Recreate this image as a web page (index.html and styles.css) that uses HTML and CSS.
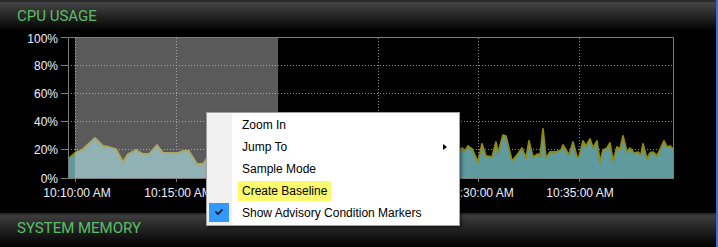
FILE: index.html
```html
<!DOCTYPE html>
<html lang="en">
<head>
  <meta charset="UTF-8">
  <title>Performance Monitor</title>
  <link rel="stylesheet" href="styles.css">
</head>
<body>
  <div class="window">
    <section class="panel">
      <header class="panel-head">CPU USAGE</header>
      <div class="chart">
        <svg width="716" height="180" viewBox="0 33 716 180">
          <!-- grid -->
          <g class="grid">
            <line x1="68" y1="65.5" x2="673" y2="65.5"/>
            <line x1="68" y1="93.5" x2="673" y2="93.5"/>
            <line x1="68" y1="121.5" x2="673" y2="121.5"/>
            <line x1="68" y1="149.5" x2="673" y2="149.5"/>
            <line x1="75.5" y1="38" x2="75.5" y2="178"/>
            <line x1="176.5" y1="38" x2="176.5" y2="178"/>
            <line x1="378.5" y1="38" x2="378.5" y2="178"/>
            <line x1="478.5" y1="38" x2="478.5" y2="178"/>
            <line x1="579.5" y1="38" x2="579.5" y2="178"/>
          </g>

          <!-- series -->
          <path class="area" id="cpuArea" d=""/>
          <polyline class="series" id="cpuLine" points=""/>

          <!-- selected range -->
          <rect class="selection" x="75" y="37.5" width="202" height="140.5"/>
          <line class="marker" x1="277.5" y1="37.5" x2="277.5" y2="178"/>

          <!-- axes -->
          <g class="axis">
            <path d="M68.5 37.5 H673.5 V178.5 H68.5 Z"/>
            <path d="M61 37.5 H68 M61 65.5 H68 M61 93.5 H68 M61 121.5 H68 M61 149.5 H68 M61 178.5 H68"/>
            <path d="M75.5 178 V182 M176.5 178 V182 M277.5 178 V182 M378.5 178 V182 M478.5 178 V182 M579.5 178 V182"/>
          </g>

          <g class="y-labels">
            <text x="58" y="42.5">100%</text>
            <text x="58" y="70">80%</text>
            <text x="58" y="98">60%</text>
            <text x="58" y="126">40%</text>
            <text x="58" y="154">20%</text>
            <text x="58" y="182.5">0%</text>
          </g>
          <!-- 10:20 and 10:25 sit under the context menu -->
          <g class="x-labels">
            <text x="77" y="197">10:10:00 AM</text>
            <text x="178" y="197">10:15:00 AM</text>
            <text x="480" y="197">10:30:00 AM</text>
            <text x="580" y="197">10:35:00 AM</text>
          </g>
        </svg>
      </div>
    </section>

    <section class="panel">
      <header class="panel-head panel-head-low">SYSTEM MEMORY</header>
    </section>

    <ul class="context-menu">
      <li>Zoom In</li>
      <li class="has-sub">Jump To</li>
      <li>Sample Mode</li>
      <li><span class="highlight">Create Baseline</span></li>
      <li class="checked">
        <span class="check-box">
          <svg width="20" height="19" viewBox="0 0 20 19"><polyline points="6.5,8.5 9,11 13.5,6.5" fill="none" stroke="#0a1020" stroke-width="1.6"/></svg>
        </span>
        Show Advisory Condition Markers
      </li>
    </ul>
  </div>

  <script>
    // cpu samples, x in px along the plot, y in px (178 = 0%, 37 = 100%)
    const samples = [
      [68,159],[75,153],[82,150],[95,138],[103,146],[109,147],[116,149],[123,162],[128,154],[136,150],
      [143,154],[149,154],[157,145],[163,153],[177,153],[183,151],[189,151],[197,164],[203,164],[207,158],
      [210,155],[214,160],[218,150],[222,146],[226,156],[230,152],[234,144],[238,158],[242,150],[246,153],
      [250,141],[254,155],[258,160],[262,149],[266,147],[270,157],[274,151],[278,143],[282,156],[286,152],
      [290,161],[294,148],[298,146],[302,155],[306,150],[310,139],[314,154],[318,157],[322,149],[326,152],
      [330,160],[334,145],[338,150],[342,156],[346,142],[350,153],[354,148],[358,158],[362,151],[366,147],
      [370,155],[374,140],[378,152],[382,157],[386,149],[390,153],[394,145],[398,159],[402,150],[406,146],
      [410,155],[414,138],[418,152],[422,156],[426,148],[430,151],[434,161],[438,146],[442,150],[446,155],
      [450,143],[454,152],[457,149],[460,150],[462,148],[465,151],[468,146],[472,149],[478,162],[482,144],
      [486,156],[492,157],[496,142],[498,153],[503,135],[506,136],[512,161],[517,155],[522,148],[526,158],
      [529,141],[533,157],[538,154],[540,156],[543,129],[546,158],[550,152],[555,152],[561,150],[563,145],
      [569,155],[573,142],[577,157],[579,157],[583,141],[586,146],[590,139],[593,148],[597,141],[600,162],
      [603,150],[607,148],[610,143],[613,161],[617,147],[620,149],[623,136],[627,152],[630,148],[634,153],
      [638,152],[641,155],[643,144],[647,159],[650,153],[653,152],[657,156],[664,141],[667,147],[670,146],
      [673,149]
    ];

    const pts = samples.map(p => p.join(",")).join(" ");
    document.getElementById("cpuLine").setAttribute("points", pts);
    document.getElementById("cpuArea").setAttribute("d", "M68,178 L" + pts.replace(/ /g, " L") + " L673,178 Z");
  </script>
</body>
</html>
```

FILE: styles.css
```css
body {
  margin: 0;
  background-color: #000;
  font-family: "Liberation Sans", Arial, sans-serif;
}

.window {
  position: relative;
  width: 716px;
  height: 247px;
  border-right: 2px solid #3c70d8;
  overflow: hidden;
  background-color: #000;
}

.panel-head {
  height: 33px;
  box-sizing: border-box;
  padding: 0 0 3px 17px;
  display: flex;
  align-items: center;
  border-top: 2px solid #2b2b2b;
  background: linear-gradient(#464646, #000 95%);
  color: #5cbf68;
  font-family: Roboto, "Liberation Sans", sans-serif;
  font-size: 15px;
}

.panel-head-low {
  height: 34px;
  padding-bottom: 6px;
  background: linear-gradient(#3e3e3e, #000 100%);
}

.chart {
  height: 180px;
}

.chart svg {
  display: block;
}

.grid line {
  stroke: #8a8a8a;
  stroke-width: 1;
  stroke-dasharray: 1 2;
}

.area {
  fill: #5f9b9e;
}

.series {
  fill: none;
  stroke: #8f8a12;
  stroke-width: 1.8;
  stroke-linejoin: round;
}

.selection {
  fill: #d0d0d0;
  opacity: 0.43;
}

.marker {
  stroke: #e02424;
  stroke-width: 1;
}

.axis path {
  fill: none;
  stroke: #7c7c7c;
  stroke-width: 1;
}

.y-labels text,
.x-labels text {
  fill: #eef0fa;
  font-family: "Liberation Sans", Arial, sans-serif;
  font-size: 12px;
}

.y-labels text {
  text-anchor: end;
}

.x-labels text {
  text-anchor: middle;
}

.context-menu {
  position: absolute;
  left: 206px;
  top: 112px;
  width: 252px;
  margin: 0;
  padding: 1px 0;
  list-style: none;
  border: 1px solid #a0a0a0;
  background: linear-gradient(to right, #f0f0f0 0, #f0f0f0 25px, #fdfdfd 25px, #fff 27px);
  box-shadow: 2px 2px 3px rgba(0, 0, 0, 0.4);
  font-family: "Liberation Sans", Arial, sans-serif;
  font-size: 12px;
  color: #000;
}

.context-menu li {
  position: relative;
  height: 22px;
  padding-left: 35px;
  display: flex;
  align-items: center;
}

.has-sub::after {
  content: "";
  position: absolute;
  right: 12px;
  top: 8px;
  border-left: 4px solid #000;
  border-top: 3.5px solid transparent;
  border-bottom: 3.5px solid transparent;
}

.highlight {
  margin-left: -4px;
  padding: 3px 4px;
  background-color: #fafa6c;
}

.check-box {
  position: absolute;
  left: 2px;
  top: 1px;
  width: 20px;
  height: 19px;
  background-color: #3399ff;
}

.check-box svg {
  display: block;
}
```
